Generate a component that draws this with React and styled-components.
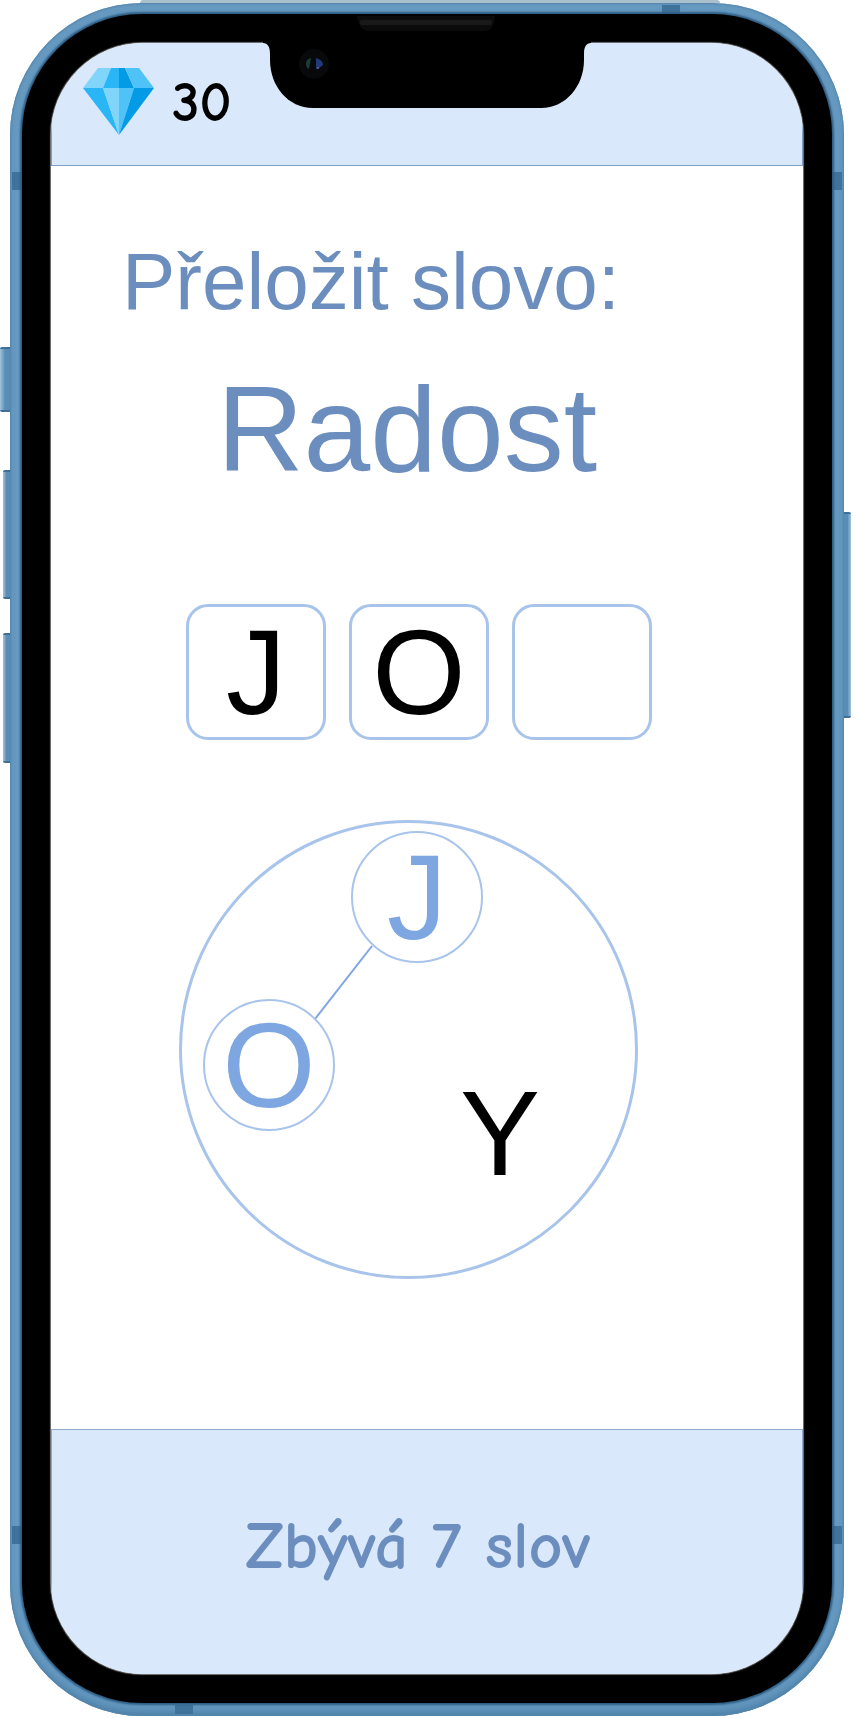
import React from "react";
import styled, { createGlobalStyle } from "styled-components";

const GlobalStyle = createGlobalStyle`
  *, *::before, *::after { box-sizing: border-box; }
  body { margin: 0; background: #ffffff; }
`;

const sans = `"Liberation Sans", Arial, sans-serif`;
const comic = `"Comic Sans MS", "Comic Neue", "Comic Relief", cursive`;

const Page = styled.div`
  padding: 3px 19px 2px 10px;
  font-family: ${sans};
`;

const Frame = styled.div`
  position: relative;
  padding: 11px 12px 13px;
  border-radius: 132px;
  background: #6699c0;
  box-shadow: inset 0 0 2px 1px #5585aa, inset 0 -8px 8px -4px #4a7ea6;

  &::before {
    content: "";
    position: absolute;
    top: -3px;
    left: 130px;
    right: 124px;
    height: 3px;
    border-radius: 3px 3px 0 0;
    background: #a9bfce;
  }
`;

const SideKey = styled.span`
  position: absolute;
  top: ${(p) => p.$top}px;
  height: ${(p) => p.$length}px;
  ${(p) => p.$side}: -${(p) => p.$depth || 7}px;
  width: ${(p) => p.$depth || 7}px;
  border: solid #3d6f97;
  border-width: 2px 0;
  border-radius: ${(p) => (p.$side === "left" ? "2px 0 0 2px" : "0 2px 2px 0")};
  background: linear-gradient(
    to ${(p) => p.$side},
    #5a8db5 50%,
    #a3c3da
  );
`;

const Antenna = styled.span`
  position: absolute;
  background: #3f739b;
  ${(p) => p.$edge}: 2px;
  ${(p) =>
    p.$edge === "left" || p.$edge === "right"
      ? "width: 10px; height: 18px;"
      : "width: 18px; height: 9px;"}
  ${(p) => p.$from}: ${(p) => p.$at}px;
`;

const Bezel = styled.div`
  position: relative;
  padding: 29px;
  border-radius: 120px;
  background: #000000;
  box-shadow: 0 0 2px 2px #2d5d83;
`;

const Screen = styled.div`
  position: relative;
  display: flex;
  flex-direction: column;
  overflow: hidden;
  border-radius: 92px;
  background: #ffffff;
  box-shadow: 0 0 1px 1px #777777;
`;

const NotchAnchor = styled.div`
  position: absolute;
  top: 0;
  left: 0;
  right: 0;
`;

const NotchDrawing = styled.svg`
  position: absolute;
  top: 0;
  left: calc(50% - 164px);
`;

const TopBar = styled.header`
  display: flex;
  align-items: flex-start;
  gap: 18px;
  height: 123px;
  padding: 25px 31px;
  border: 1px solid #7e9fca;
  border-top: 0;
  background: #dae8fc;
`;

const Count = styled.span`
  font-family: ${comic};
  font-size: 56px;
  font-weight: 700;
  line-height: 70px;
  color: #000000;
`;

const Game = styled.main`
  display: flex;
  flex-direction: column;
  align-items: center;
  padding: 68px 0 150px;
`;

const Prompt = styled.h1`
  align-self: flex-start;
  margin: 0;
  padding-left: 71px;
  font-size: 80px;
  font-weight: 400;
  line-height: 96px;
  color: #6c8ebf;
`;

const Word = styled.p`
  margin: 27px 40px 0 0;
  font-size: 120px;
  line-height: 144px;
  color: #6c8ebf;
`;

const Slots = styled.div`
  display: flex;
  gap: 23px;
  margin: 103px 16px 0 0;
`;

const Slot = styled.div`
  display: flex;
  align-items: center;
  justify-content: center;
  width: 140px;
  height: 136px;
  border: 3px solid #a9c4eb;
  border-radius: 22px;
  font-size: 120px;
  line-height: 130px;
  color: #000000;
`;

const Wheel = styled.div`
  position: relative;
  width: 459px;
  height: 459px;
  margin: 80px 37px 0 0;
  border: 3px solid #a9c4eb;
  border-radius: 50%;
`;

const Links = styled.svg`
  position: absolute;
  inset: 0;
`;

const Letter = styled.button`
  position: absolute;
  left: ${(p) => p.$x}px;
  top: ${(p) => p.$y}px;
  display: flex;
  align-items: center;
  justify-content: center;
  width: 132px;
  height: 132px;
  padding: 0;
  border: 2px solid ${(p) => (p.$picked ? "#a9c4eb" : "transparent")};
  border-radius: 50%;
  background: transparent;
  font-family: ${sans};
  font-size: 120px;
  line-height: 128px;
  color: ${(p) => (p.$picked ? "#7ea6e0" : "#000000")};
  cursor: pointer;
`;

const BottomBar = styled.footer`
  display: flex;
  align-items: center;
  justify-content: center;
  height: 245px;
  padding: 0 18px 10px 0;
  border: 1px solid #90aacf;
  border-bottom: 0;
  background: #dae8fc;
  font-family: ${comic};
  font-size: 66px;
  font-weight: 700;
  line-height: 84px;
  color: #6c8ebf;
`;

function Gem() {
  return (
    <svg width="71" height="67" viewBox="0 0 71 67" aria-hidden="true">
      <path d="M15 0H28L20 20H0Z" fill="#81d4fa" />
      <path d="M28 0H36V20H20Z" fill="#29b6f6" />
      <path d="M36 0H42L51 20H36Z" fill="#039be5" />
      <path d="M42 0H56L71 20H51Z" fill="#4fc3f7" />
      <path d="M0 20H20L36 67Z" fill="#29b6f6" />
      <path d="M20 20H36V67Z" fill="#81d4fa" />
      <path d="M36 20H51L36 67Z" fill="#4fc3f7" />
      <path d="M51 20H71L36 67Z" fill="#039be5" />
    </svg>
  );
}

function Notch() {
  return (
    <NotchDrawing width="328" height="95" viewBox="0 0 328 95" aria-hidden="true">
      <path
        d="M0 29C5 29 7 33 7 40V46C7 72 25 94 50 94H278C303 94 321 72 321 46V40C321 33 323 29 328 29V20H0Z"
        fill="#000000"
      />
      <path d="M94 2H232Q231 17 221 17H106Q96 17 94 2Z" fill="#0b0b0b" />
      <rect x="97" y="6" width="132" height="5" rx="2" fill="#191919" />
      <circle cx="51" cy="50" r="15" fill="#08090a" />
      <path d="M48 44Q43 45 43 50Q43 54 46 55Z" fill="#1a3d3a" />
      <path d="M53 44Q60 46 60 51L55 55H53Z" fill="#22397a" />
      <circle cx="55" cy="54" r="1" fill="#7d4f96" />
    </NotchDrawing>
  );
}

const answer = ["J", "O", ""];

const letters = [
  { char: "J", x: 169, y: 8, picked: true },
  { char: "O", x: 21, y: 176, picked: true },
  { char: "Y", x: 252, y: 244, picked: false },
];

export default function App() {
  return (
    <Page>
      <GlobalStyle />
      <Frame>
        <SideKey $side="left" $top={344} $length={65} $depth={10} />
        <SideKey $side="left" $top={467} $length={129} />
        <SideKey $side="left" $top={630} $length={130} />
        <SideKey $side="right" $top={509} $length={206} />
        <Antenna $edge="left" $from="top" $at={169} />
        <Antenna $edge="right" $from="top" $at={169} />
        <Antenna $edge="left" $from="bottom" $at={172} />
        <Antenna $edge="right" $from="bottom" $at={172} />
        <Antenna $edge="top" $from="right" $at={164} />
        <Antenna $edge="bottom" $from="left" $at={165} />
        <Bezel>
          <Screen>
            <TopBar>
              <Gem />
              <Count>30</Count>
            </TopBar>
            <Game>
              <Prompt>Přeložit slovo:</Prompt>
              <Word>Radost</Word>
              <Slots>
                {answer.map((char, i) => (
                  <Slot key={i}>{char}</Slot>
                ))}
              </Slots>
              <Wheel>
                <Links width="453" height="453" viewBox="0 0 453 453" aria-hidden="true">
                  <line x1="190" y1="123" x2="133" y2="196" stroke="#7ea6e0" strokeWidth="2" />
                </Links>
                {letters.map((l) => (
                  <Letter key={l.char} type="button" $x={l.x} $y={l.y} $picked={l.picked}>
                    {l.char}
                  </Letter>
                ))}
              </Wheel>
            </Game>
            <BottomBar>Zbývá 7 slov</BottomBar>
          </Screen>
          <NotchAnchor>
            <Notch />
          </NotchAnchor>
        </Bezel>
      </Frame>
    </Page>
  );
}
